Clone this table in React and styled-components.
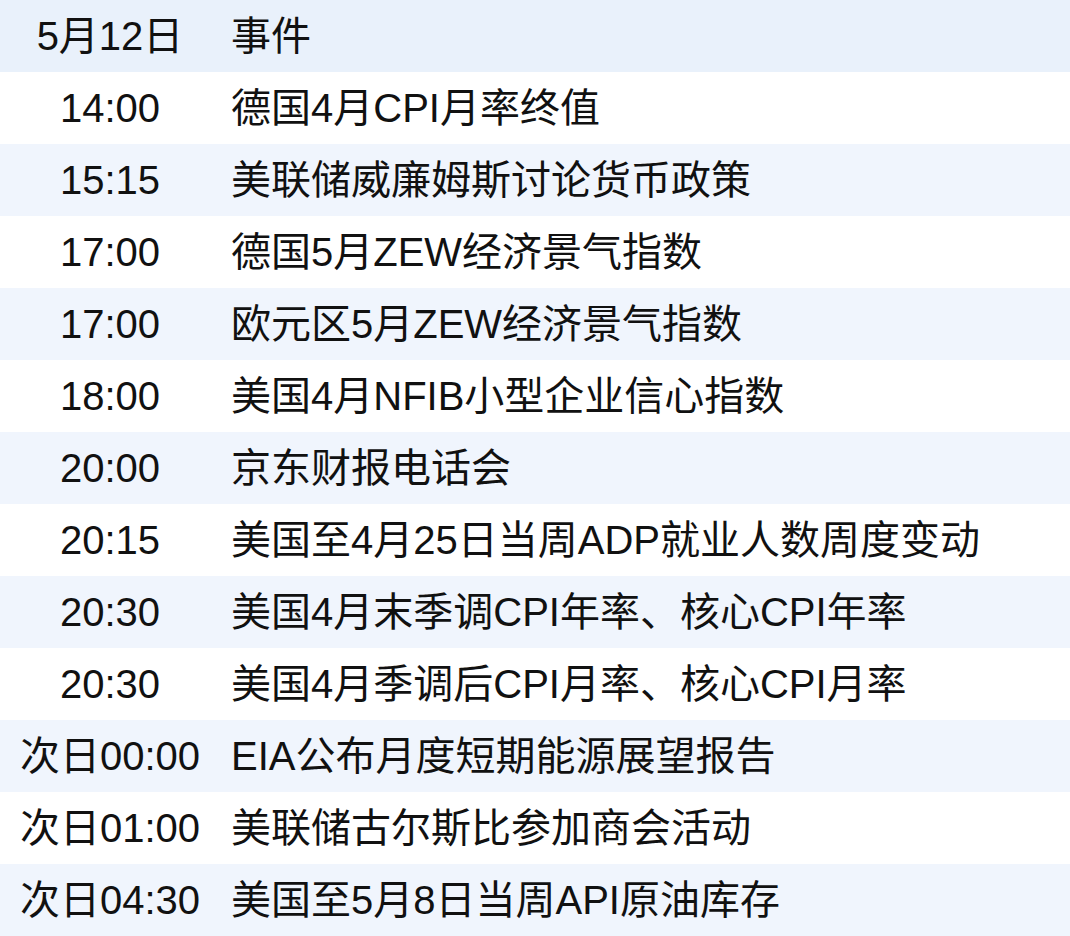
import React from "react";
import styled, { createGlobalStyle } from "styled-components";

const GlobalStyle = createGlobalStyle`
  html, body {
    margin: 0;
    padding: 0;
    background: #ffffff;
  }
  body {
    font-family: "Liberation Sans", Arial, "Noto Sans CJK SC", sans-serif;
  }
`;

const Table = styled("div")(() => ({
  width: "1070px",
  display: "flex",
  flexDirection: "column",
}));

const Row = styled("div")(({ $tone }) => ({
  display: "grid",
  gridTemplateColumns: "220px 1fr",
  alignItems: "center",
  height: "72px",
  backgroundColor:
    $tone === "head" ? "#e9f1fb" : $tone === "alt" ? "#f0f5fd" : "#ffffff",
  color: "#111111",
  fontSize: "40px",
  lineHeight: "72px",
}));

const TimeCell = styled("div")(() => ({
  textAlign: "center",
  whiteSpace: "nowrap",
}));

const EventCell = styled("div")(() => ({
  paddingLeft: "11px",
  whiteSpace: "nowrap",
}));

const rows = [
  { time: "14:00", event: "德国4月CPI月率终值" },
  { time: "15:15", event: "美联储威廉姆斯讨论货币政策" },
  { time: "17:00", event: "德国5月ZEW经济景气指数" },
  { time: "17:00", event: "欧元区5月ZEW经济景气指数" },
  { time: "18:00", event: "美国4月NFIB小型企业信心指数" },
  { time: "20:00", event: "京东财报电话会" },
  { time: "20:15", event: "美国至4月25日当周ADP就业人数周度变动" },
  { time: "20:30", event: "美国4月末季调CPI年率、核心CPI年率" },
  { time: "20:30", event: "美国4月季调后CPI月率、核心CPI月率" },
  { time: "次日00:00", event: "EIA公布月度短期能源展望报告" },
  { time: "次日01:00", event: "美联储古尔斯比参加商会活动" },
  { time: "次日04:30", event: "美国至5月8日当周API原油库存" },
];

const App = () => {
  return (
    <>
      <GlobalStyle />
      <Table>
        <Row $tone="head">
          <TimeCell>5月12日</TimeCell>
          <EventCell>事件</EventCell>
        </Row>
        {rows.map((r, i) => (
          <Row key={i} $tone={i % 2 === 0 ? "plain" : "alt"}>
            <TimeCell>{r.time}</TimeCell>
            <EventCell>{r.event}</EventCell>
          </Row>
        ))}
      </Table>
    </>
  );
};

export default App;
